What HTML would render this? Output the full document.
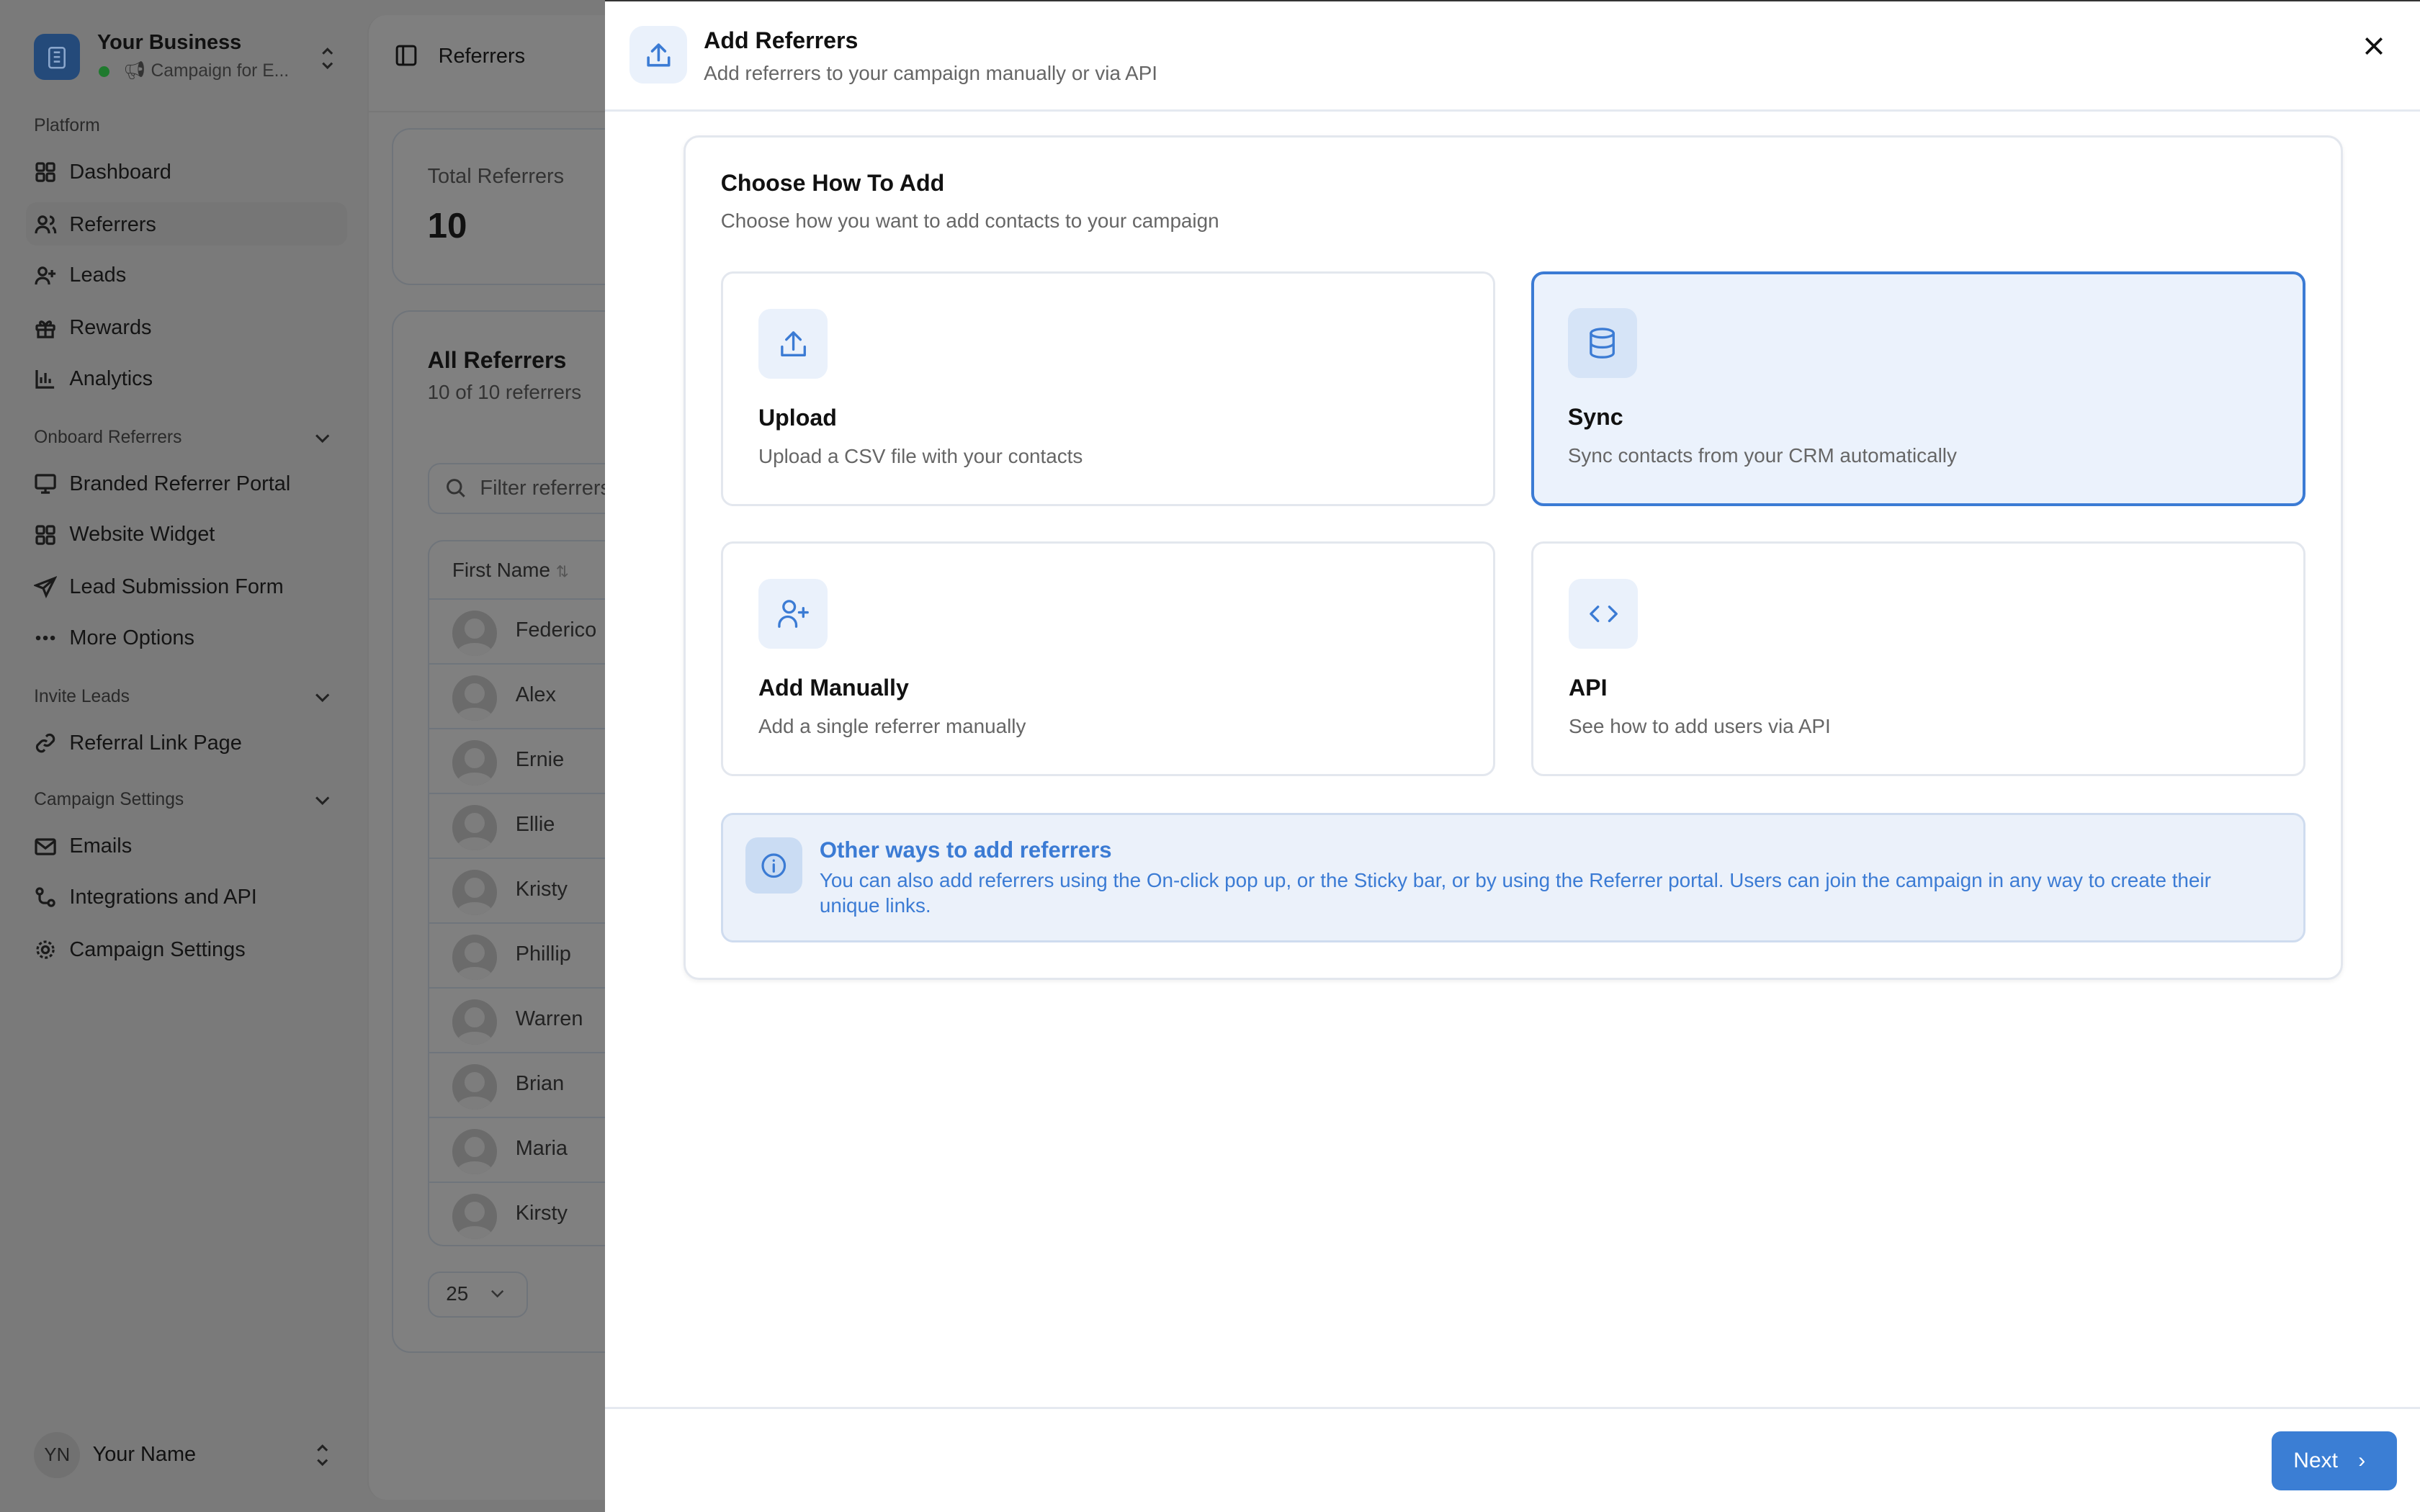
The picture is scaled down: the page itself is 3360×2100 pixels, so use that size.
<!DOCTYPE html>
<html><head><meta charset="utf-8">
<style>
*{box-sizing:border-box;margin:0;padding:0}
html,body{width:3360px;height:2100px;overflow:hidden;background:#7b7b7b}
#r{zoom:2.142857;width:1568px;height:980px;position:relative;font-family:"Liberation Sans",sans-serif;color:#111;overflow:hidden;background:#7a7a7a}
.abs{position:absolute}
.sb{left:0;top:0;width:238px;height:980px;background:#7a7a7a}
.ni{position:absolute;left:22px;font-size:13.5px;color:#141414;display:flex;align-items:center;gap:8px}
.ni svg{width:15px;height:15px;stroke:#1a1a1a;fill:none;stroke-width:1.6}
.sec{position:absolute;left:22px;font-size:11.5px;color:#2a2a2a}
.chev{position:absolute;left:204px;width:10px;height:10px}
.main{left:238px;top:0;width:200px;height:980px;background:#7f7f7f;border-left:1px solid #777}
.card{position:absolute;border:1px solid #6f747a;border-radius:12px;background:#808080}
.row{position:absolute;left:278px;width:120px;height:42px;border-top:1px solid #6f757c;font-size:13.5px;color:#222}
.av{position:absolute;left:15px;top:7px;width:29px;height:29px;border-radius:50%;background:#6b6b6b;overflow:hidden}
.av:before{content:"";position:absolute;left:8px;top:5px;width:13px;height:13px;border-radius:50%;background:#7d7d7d}
.av:after{content:"";position:absolute;left:3px;top:21px;width:23px;height:14px;border-radius:50%;background:#7d7d7d}
.row span{position:absolute;left:56px;top:12px}
.modal{left:392px;top:0;width:1176px;height:980px;background:#fff;border-top:1px solid #333}
.opt{position:absolute;width:502px;height:152px;border:1.5px solid #e3e7ee;border-radius:8px;background:#fff}
.opt .ic{position:absolute;left:23px;top:23px;width:45px;height:45px;border-radius:8px;background:#eaf1fb;display:flex;align-items:center;justify-content:center}
.opt .ic svg{width:22px;height:22px;stroke:#3b7bd4;fill:none;stroke-width:1.7;stroke-linecap:round;stroke-linejoin:round}
.opt h3{position:absolute;left:23px;top:85px;font-size:15px;font-weight:bold;color:#111}
.opt p{position:absolute;left:23px;top:111px;font-size:13px;color:#666}
</style></head><body><div id="r">
<div class="abs sb">
  <div class="abs" style="left:22px;top:22px;width:30px;height:30px;border-radius:7px;background:#244a7a"></div>
  <svg class="abs" style="left:30px;top:29px" width="14" height="16" viewBox="0 0 14 16" fill="none" stroke="#8aa6cc" stroke-width="1.2"><rect x="2" y="2" width="10" height="13" rx="1.5"/><path d="M5 5h4M5 8h4M5 11h4"/></svg>
  <div class="abs" style="left:63px;top:20px;font-size:13.5px;font-weight:bold;color:#111">Your Business</div>
  <div class="abs" style="left:64px;top:43px;width:7px;height:7px;border-radius:50%;background:#1f7a2e"></div>
  <div class="abs" style="left:80px;top:39px;font-size:11.5px;color:#333">📢︎ Campaign for E...</div>
  <svg class="abs" style="left:207px;top:30px" width="10" height="16" viewBox="0 0 10 16" fill="none" stroke="#222" stroke-width="1.4"><path d="M2 5l3-3 3 3M2 11l3 3 3-3"/></svg>
  <div class="sec" style="top:75px">Platform</div>
  <div class="abs" style="left:17px;top:131px;width:208px;height:28px;border-radius:7px;background:#767676"></div>
  <div class="ni" style="top:104px"><svg viewBox="0 0 16 16"><rect x="2" y="2" width="5" height="5" rx="1"/><rect x="9" y="2" width="5" height="5" rx="1"/><rect x="2" y="9" width="5" height="5" rx="1"/><rect x="9" y="9" width="5" height="5" rx="1"/></svg>Dashboard</div>
  <div class="ni" style="top:138px"><svg viewBox="0 0 16 16"><circle cx="6" cy="5" r="2.6"/><path d="M1.5 14c0-3 2-4.5 4.5-4.5s4.5 1.5 4.5 4.5M11 2.5a2.5 2.5 0 010 5M13 9.8c1.2.6 1.8 2 1.8 4.2"/></svg>Referrers</div>
  <div class="ni" style="top:171px"><svg viewBox="0 0 16 16"><circle cx="6" cy="5" r="2.6"/><path d="M1.5 14c0-3 2-4.5 4.5-4.5s4.5 1.5 4.5 4.5M12.5 4v5M10 6.5h5"/></svg>Leads</div>
  <div class="ni" style="top:205px"><svg viewBox="0 0 16 16"><rect x="2" y="6" width="12" height="3" rx=".5"/><path d="M3 9v5h10V9M8 6v8M8 6C6 2 3 3 5 6M8 6c2-4 5-3 3 0"/></svg>Rewards</div>
  <div class="ni" style="top:238px"><svg viewBox="0 0 16 16"><path d="M2 2v12h12M5 11V7M8 11V4M11 11V8"/></svg>Analytics</div>
  <div class="sec" style="top:277px">Onboard Referrers</div>
  <svg class="chev" style="top:279px" viewBox="0 0 10 10" fill="none" stroke="#222" stroke-width="1.4"><path d="M1 3l4 4 4-4"/></svg>
  <div class="ni" style="top:306px"><svg viewBox="0 0 16 16"><rect x="1.5" y="2" width="13" height="9" rx="1"/><path d="M8 11v3M5 14h6"/></svg>Branded Referrer Portal</div>
  <div class="ni" style="top:339px"><svg viewBox="0 0 16 16"><rect x="2" y="2" width="5" height="5" rx="1"/><rect x="9" y="2" width="5" height="5" rx="1"/><rect x="2" y="9" width="5" height="5" rx="1"/><rect x="9" y="9" width="5" height="5" rx="1"/></svg>Website Widget</div>
  <div class="ni" style="top:373px"><svg viewBox="0 0 16 16"><path d="M14.5 1.5L1.5 6.5l5 2 2 5z M14.5 1.5L6.5 8.5"/></svg>Lead Submission Form</div>
  <div class="ni" style="top:406px"><svg viewBox="0 0 16 16"><circle cx="3" cy="8" r=".8"/><circle cx="8" cy="8" r=".8"/><circle cx="13" cy="8" r=".8"/></svg>More Options</div>
  <div class="sec" style="top:445px">Invite Leads</div>
  <svg class="chev" style="top:447px" viewBox="0 0 10 10" fill="none" stroke="#222" stroke-width="1.4"><path d="M1 3l4 4 4-4"/></svg>
  <div class="ni" style="top:474px"><svg viewBox="0 0 16 16"><path d="M7 9a3 3 0 004 0l2.5-2.5a3 3 0 00-4-4L8.5 3.5M9 7a3 3 0 00-4 0L2.5 9.5a3 3 0 004 4l1-1"/></svg>Referral Link Page</div>
  <div class="sec" style="top:512px">Campaign Settings</div>
  <svg class="chev" style="top:514px" viewBox="0 0 10 10" fill="none" stroke="#222" stroke-width="1.4"><path d="M1 3l4 4 4-4"/></svg>
  <div class="ni" style="top:541px"><svg viewBox="0 0 16 16"><rect x="1.5" y="3" width="13" height="10" rx="1"/><path d="M1.5 4l6.5 5 6.5-5"/></svg>Emails</div>
  <div class="ni" style="top:574px"><svg viewBox="0 0 16 16"><circle cx="4" cy="4" r="2"/><circle cx="12" cy="12" r="2"/><path d="M4 6v3a3 3 0 003 3h3"/></svg>Integrations and API</div>
  <div class="ni" style="top:608px"><svg viewBox="0 0 16 16"><circle cx="8" cy="8" r="2.3"/><circle cx="8" cy="8" r="5.5" stroke-dasharray="2 1.5"/></svg>Campaign Settings</div>
  <div class="abs" style="left:22px;top:928px;width:30px;height:30px;border-radius:50%;background:#717171;font-size:12px;color:#222;text-align:center;line-height:30px">YN</div>
  <div class="abs" style="left:60px;top:935px;font-size:13.5px;color:#111">Your Name</div>
  <svg class="abs" style="left:204px;top:935px" width="10" height="16" viewBox="0 0 10 16" fill="none" stroke="#222" stroke-width="1.4"><path d="M2 5l3-3 3 3M2 11l3 3 3-3"/></svg>
</div>
<div class="abs main" style="border-radius:12px 0 0 12px;top:10px;height:962px"></div>
<div class="abs" style="left:238px;top:72px;width:160px;height:1px;background:#777"></div>
<svg class="abs" style="left:256px;top:29px" width="14" height="14" viewBox="0 0 14 14" fill="none" stroke="#111" stroke-width="1.4"><rect x="1" y="1" width="12" height="12" rx="1.5"/><path d="M5 1v12"/></svg>
<div class="abs" style="left:284px;top:29px;font-size:13.5px;color:#111">Referrers</div>
<div class="card" style="left:254px;top:83px;width:160px;height:102px"></div>
<div class="abs" style="left:277px;top:107px;font-size:13.5px;color:#333">Total Referrers</div>
<div class="abs" style="left:277px;top:133px;font-size:23px;font-weight:bold;color:#111">10</div>
<div class="card" style="left:254px;top:201px;width:160px;height:676px"></div>
<div class="abs" style="left:277px;top:225px;font-size:15px;font-weight:bold;color:#111">All Referrers</div>
<div class="abs" style="left:277px;top:247px;font-size:13px;color:#333">10 of 10 referrers</div>
<div class="card" style="left:277px;top:300px;width:130px;height:33px;border-radius:8px"></div>
<svg class="abs" style="left:289px;top:310px" width="13" height="13" viewBox="0 0 13 13" fill="none" stroke="#333" stroke-width="1.4"><circle cx="5.5" cy="5.5" r="4.3"/><path d="M9 9l3 3"/></svg>
<div class="abs" style="left:311px;top:309px;font-size:13.5px;color:#333">Filter referrers</div>
<div class="card" style="left:277px;top:350px;width:130px;height:458px;border-radius:10px"></div>
<div class="abs" style="left:293px;top:362px;font-size:13px;color:#222">First Name <span style="color:#555;font-size:10px">⇅</span></div>
<div class="row" style="top:388px"><div class="av"></div><span>Federico</span></div>
<div class="row" style="top:430px"><div class="av"></div><span>Alex</span></div>
<div class="row" style="top:472px"><div class="av"></div><span>Ernie</span></div>
<div class="row" style="top:514px"><div class="av"></div><span>Ellie</span></div>
<div class="row" style="top:556px"><div class="av"></div><span>Kristy</span></div>
<div class="row" style="top:598px"><div class="av"></div><span>Phillip</span></div>
<div class="row" style="top:640px"><div class="av"></div><span>Warren</span></div>
<div class="row" style="top:682px"><div class="av"></div><span>Brian</span></div>
<div class="row" style="top:724px"><div class="av"></div><span>Maria</span></div>
<div class="row" style="top:766px"><div class="av"></div><span>Kirsty</span></div>
<div class="card" style="left:277px;top:824px;width:65px;height:30px;border-radius:8px"></div>
<div class="abs" style="left:289px;top:831px;font-size:13px;color:#222">25</div>
<svg class="abs" style="left:318px;top:834px" width="9" height="9" viewBox="0 0 10 10" fill="none" stroke="#333" stroke-width="1.3"><path d="M1 3l4 4 4-4"/></svg>

<div class="abs modal">
  <div class="abs" style="left:16px;top:16px;width:37px;height:37px;border-radius:9px;background:#eaf1fb;display:flex;align-items:center;justify-content:center"><svg width="20" height="20" viewBox="0 0 24 24" fill="none" stroke="#3b7bd4" stroke-width="2" stroke-linecap="round" stroke-linejoin="round"><path d="M4 14v6h16v-6M12 4v12M7 9l5-5 5 5"/></svg></div>
  <div class="abs" style="left:64px;top:17px;font-size:15px;font-weight:bold;color:#111">Add Referrers</div>
  <div class="abs" style="left:64px;top:39px;font-size:13px;color:#666">Add referrers to your campaign manually or via API</div>
  <svg class="abs" style="left:1139px;top:22px" width="14" height="14" viewBox="0 0 14 14" stroke="#111" stroke-width="1.7"><path d="M2 2l10 10M12 2L2 12"/></svg>
  <div class="abs" style="left:0;top:70px;width:1176px;height:1.5px;background:#e5e9f0"></div>
  <div class="abs" style="left:51px;top:87px;width:1075px;height:547px;border:1.5px solid #e3e7ee;border-radius:10px;box-shadow:0 1px 3px rgba(0,0,0,.06)"></div>
  <div class="abs" style="left:75px;top:109px;font-size:15px;font-weight:bold;color:#111">Choose How To Add</div>
  <div class="abs" style="left:75px;top:135px;font-size:13px;color:#666">Choose how you want to add contacts to your campaign</div>
  <div class="opt" style="left:75px;top:175px"><div class="ic"><svg viewBox="0 0 24 24"><path d="M4 14v6h16v-6M12 4v12M7 9l5-5 5 5"/></svg></div><h3>Upload</h3><p>Upload a CSV file with your contacts</p></div>
  <div class="opt" style="left:600px;top:175px;border:2px solid #3b7bd4;background:#ebf2fc"><div class="ic" style="background:#d6e4f7;left:22px;top:22px"><svg viewBox="0 0 24 24"><ellipse cx="12" cy="5" rx="8" ry="3"/><path d="M4 5v14c0 1.7 3.6 3 8 3s8-1.3 8-3V5M4 12c0 1.7 3.6 3 8 3s8-1.3 8-3"/></svg></div><h3 style="left:22px;top:84px">Sync</h3><p style="left:22px;top:110px">Sync contacts from your CRM automatically</p></div>
  <div class="opt" style="left:75px;top:350px"><div class="ic"><svg viewBox="0 0 24 24"><circle cx="9" cy="7" r="4"/><path d="M2 21v-1a6 6 0 0112 0v1M19 8v6M16 11h6"/></svg></div><h3>Add Manually</h3><p>Add a single referrer manually</p></div>
  <div class="opt" style="left:600px;top:350px"><div class="ic"><svg viewBox="0 0 24 24"><path d="M8 7l-5 5 5 5M16 7l5 5-5 5"/></svg></div><h3>API</h3><p>See how to add users via API</p></div>
  <div class="abs" style="left:75px;top:526px;width:1027px;height:84px;border:1.5px solid #cfdcef;border-radius:8px;background:#ebf1fa"></div>
  <div class="abs" style="left:91px;top:542px;width:37px;height:36px;border-radius:8px;background:#cadcf3;display:flex;align-items:center;justify-content:center"><svg width="18" height="18" viewBox="0 0 24 24" fill="none" stroke="#3b7bd4" stroke-width="2" stroke-linecap="round"><circle cx="12" cy="12" r="9.5"/><path d="M12 11v6M12 7.5v.2"/></svg></div>
  <div class="abs" style="left:139px;top:542px;font-size:14.5px;font-weight:bold;color:#3b7bd4">Other ways to add referrers</div>
  <div class="abs" style="left:139px;top:562px;width:940px;font-size:13px;line-height:16px;color:#3b7bd4">You can also add referrers using the On-click pop up, or the Sticky bar, or by using the Referrer portal. Users can join the campaign in any way to create their unique links.</div>
  <div class="abs" style="left:0;top:911px;width:1176px;height:1.5px;background:#e5e9f0"></div>
  <div class="abs" style="left:1080px;top:927px;width:81px;height:38px;border-radius:6px;background:#3b7ed4;color:#fff;font-size:14px;line-height:38px;padding-left:14px">Next <span style="position:absolute;left:56px;top:0">›</span></div>
</div>
</div></body></html>
